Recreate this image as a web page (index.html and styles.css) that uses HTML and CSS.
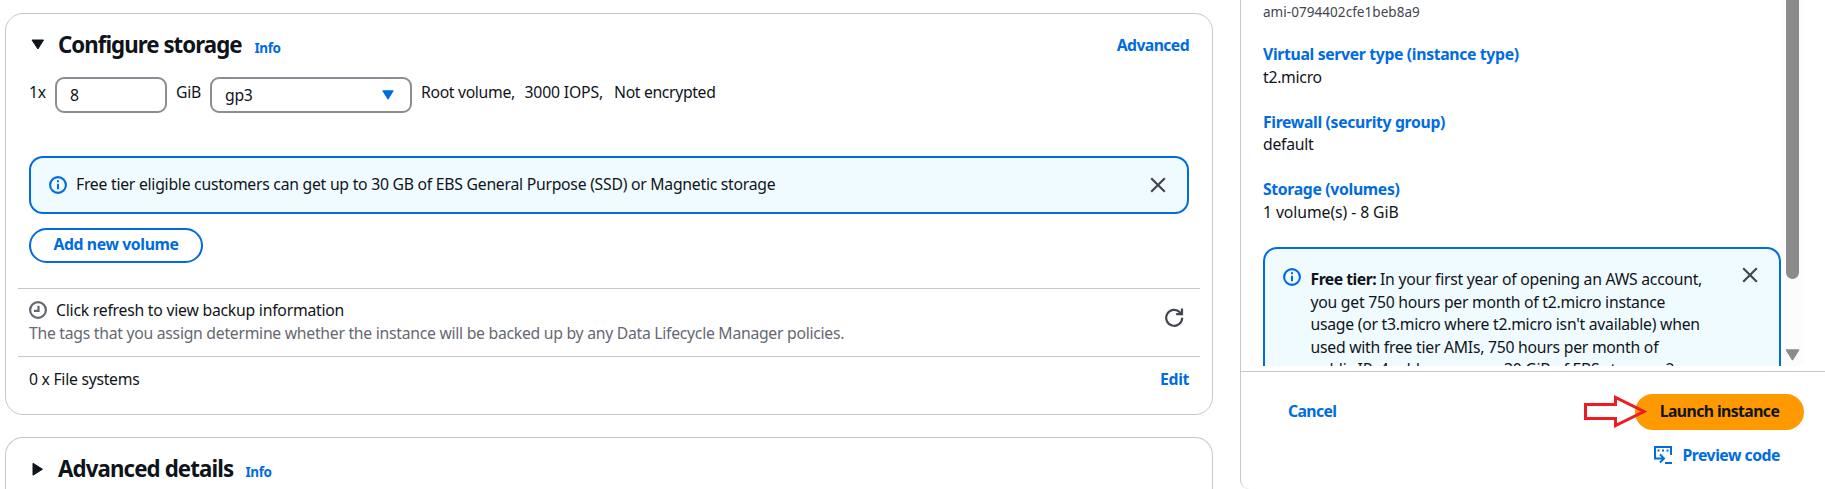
FILE: index.html
```
<!DOCTYPE html>
<html lang="en">
<head>
<meta charset="utf-8">
<title>Launch an instance</title>
<link rel="stylesheet" href="styles.css">
</head>
<body>
<main class="settings">
  <section class="card">
    <header class="card-header">
      <svg class="caret" width="18" height="18" viewBox="0 0 18 18"><path d="M3 4h11.500L8.900 13z" fill="#0f141a" stroke="#0f141a" stroke-linejoin="round"/></svg>
      <h2 class="title">Configure storage</h2>
      <a class="info">Info</a>
      <a class="link header-action">Advanced</a>
    </header>
    <div class="volume">
      <span class="count">1x</span>
      <div class="field size">8</div>
      <span class="unit">GiB</span>
      <div class="field type"><span>gp3</span><svg width="12" height="10" viewBox="0 0 12 10"><path d="M.8.800h10.400L6 9.200z" fill="#006ce0" stroke="#006ce0" stroke-linejoin="round"/></svg></div>
      <span class="root">Root volume,</span><span class="iops">3000 IOPS,</span><span class="encryption">Not encrypted</span>
    </div>
    <div class="alert storage-alert">
      <svg class="alert-icon" width="18" height="18" viewBox="0 0 18 18"><circle cx="9" cy="9" r="7.900" fill="none" stroke="#006ce0" stroke-width="2.100"/><path d="M8 4.300h2v2H8zM8 7.700h2v5.500H8z" fill="#006ce0"/></svg>
      <p class="storage-text">Free tier eligible customers can get up to 30 GB of EBS General Purpose (SSD) or Magnetic storage</p>
      <svg class="close" width="16" height="16" viewBox="0 0 16 16"><path d="M1.200 1.200l13.600 13.600M14.800 1.200L1.200 14.800" stroke="#424650" stroke-width="2.200"/></svg>
    </div>
    <button class="btn-outline">Add new volume</button>
    <div class="backup">
      <div>
        <div class="backup-title"><svg width="18" height="18" viewBox="0 0 18 18" fill="none" stroke="#656871" stroke-width="2.200"><circle cx="9" cy="9" r="7.900"/><path d="M9.500 4.800v5H5"/></svg><span>Click refresh to view backup information</span></div>
        <p class="backup-note">The tags that you assign determine whether the instance will be backed up by any Data Lifecycle Manager policies.</p>
      </div>
      <svg class="refresh" width="19" height="19" viewBox="0 0 19 19" fill="none" stroke="#424650" stroke-width="2.200"><path d="M17.200 9.800A8 8 0 1 1 14.900 4.200L16.500 6"/><path d="M17 .500v5.700h-5.800"/></svg>
    </div>
    <div class="file-systems"><span>0 x File systems</span><a class="link edit">Edit</a></div>
  </section>
  <section class="card advanced">
    <header class="card-header">
      <svg class="caret" width="18" height="18" viewBox="0 0 18 18"><path d="M4 3.300v11.900L13.500 9.200z" fill="#0f141a" stroke="#0f141a" stroke-linejoin="round"/></svg>
      <h2 class="title advanced-title">Advanced details</h2>
      <a class="info">Info</a>
    </header>
  </section>
</main>
<aside class="summary">
  <div class="scroller">
    <div class="details">
      <p class="ami">ami-0794402cfe1beb8a9</p>
      <dl class="pair"><dt>Virtual server type (instance type)</dt><dd>t2.micro</dd></dl>
      <dl class="pair"><dt>Firewall (security group)</dt><dd>default</dd></dl>
      <dl class="pair"><dt>Storage (volumes)</dt><dd class="volumes">1 volume(s) - 8 GiB</dd></dl>
      <div class="alert tier-alert">
        <svg class="alert-icon" width="18" height="18" viewBox="0 0 18 18"><circle cx="9" cy="9" r="7.900" fill="none" stroke="#006ce0" stroke-width="2.100"/><path d="M8 4.300h2v2H8zM8 7.700h2v5.500H8z" fill="#006ce0"/></svg>
        <p class="tier-text"><b>Free tier:</b> In your first year of opening an AWS account,<br>you get 750 hours per month of t2.micro instance<br>usage (or t3.micro where t2.micro isn't available) when<br>used with free tier AMIs, 750 hours per month of<br>public IPv4 address usage, 30 GiB of EBS storage, 2</p>
        <svg class="close" width="16" height="16" viewBox="0 0 16 16"><path d="M1.200 1.200l13.600 13.600M14.800 1.200L1.200 14.800" stroke="#424650" stroke-width="2.200"/></svg>
      </div>
    </div>
    <div class="track">
      <div class="thumb"></div>
      <svg width="15" height="12" viewBox="0 0 15 12"><path d="M1.500 1h12L7.500 10.500z" fill="#8b8b8b" stroke="#8b8b8b" stroke-width="1.500" stroke-linejoin="round"/></svg>
    </div>
  </div>
  <footer class="actions">
    <div class="action-row">
      <a class="link">Cancel</a>
      <div class="launch-wrap">
        <button class="launch">Launch instance</button>
        <svg class="pointer" width="66" height="34" viewBox="0 0 66 34"><path d="M3.500 10.500h30v-7L62 17.500l-28.500 14v-7h-30z" fill="none" stroke="#ed1c24" stroke-width="3"/></svg>
      </div>
    </div>
    <a class="link preview"><svg width="18" height="18" viewBox="0 0 18 18" fill="none" stroke="#006ce0" stroke-width="2"><path d="M17 9V1H1v11.500h8"/><path d="M6 8.500l4 4-4 4"/><path d="M11 17h7"/><path d="M3.500 4.500h11" stroke-dasharray="2 2.500"/></svg><span>Preview code</span></a>
  </footer>
</aside>
</body>
</html>
```

FILE: styles.css
```
* { box-sizing: border-box; }
html { height: 489px; overflow: hidden; }
body {
  margin: 0;
  height: 489px;
  overflow: hidden;
  display: flex;
  align-items: flex-start;
  gap: 27px;
  padding-left: 5px;
  background: #fff;
  color: #0f141a;
  font: 15.75px/22.5px "Noto Sans", "Open Sans", sans-serif;
  letter-spacing: -.27px;
}
h2, p, dl, dd { margin: 0; }
svg { flex: none; display: block; }
button { font: inherit; font-weight: 700; }
.settings { flex: none; width: 1208px; height: 489px; overflow: hidden; padding-top: 13px; display: flex; flex-direction: column; gap: 22px; }
.card { flex: none; border: 1px solid #c6c6cd; border-radius: 18px; height: 402px; padding: 17px 12px 0; }
.advanced { height: 52px; border-bottom: 0; border-radius: 18px 18px 0 0; }
.card-header { display: flex; align-items: baseline; height: 28px; padding: 0 11px; }
.caret { align-self: center; }
.title { font-size: 22.25px; line-height: 28px; letter-spacing: -.96px; margin-left: 11px; width: 184px; white-space: nowrap; }
.advanced-title { width: 175px; letter-spacing: -.88px; }
.info { color: #006ce0; font-size: 13.5px; font-weight: 700; margin-left: 12.5px; letter-spacing: -.42px; }
.link { color: #006ce0; font-weight: 700; letter-spacing: -.6px; }
.header-action { margin-left: auto; align-self: center; padding-top: 1px; }
.volume { display: flex; height: 36px; margin-top: 18px; padding: 0 11px; line-height: 30px; white-space: nowrap; }
.count { width: 26px; }
.field { border: 2px solid #8c8c94; border-radius: 9px; height: 36px; padding: 0 13px; line-height: 32px; }
.size { width: 112px; }
.unit { width: 43px; padding-left: 9px; }
.type { width: 202px; display: flex; justify-content: space-between; align-items: center; padding-right: 16px; }
.root { margin-left: 9px; width: 103.500px; letter-spacing: -.33px; }
.iops { width: 89.500px; letter-spacing: -.17px; }
.encryption { letter-spacing: -.34px; }
.alert { display: flex; border: 2px solid #006ce0; border-radius: 14px; background: #f0fbff; }
.storage-alert { height: 58px; margin: 43px 11px 0; padding: 0 21px 0 18px; align-items: center; }
.storage-text { margin: -1px 0 0 9px; letter-spacing: -.255px; }
.alert .close { margin-left: auto; }
.btn-outline {
  display: block; width: 174px; height: 35px; margin: 14px 11px 0; padding: 0 0 3px;
  border: 2px solid #006ce0; border-radius: 18px; background: #fff;
  color: #006ce0; letter-spacing: -.38px;
}
.backup { display: flex; justify-content: space-between; margin-top: 25px; height: 68px; padding: 10px 11px 0; border-top: 1px solid #c6c6cd; }
.backup-title { display: flex; align-items: center; gap: 9px; letter-spacing: -.23px; }
.refresh { margin: 9px 5px 0 0; }
.file-systems { display: flex; justify-content: space-between; padding: 11px 11px 0; border-top: 1px solid #c6c6cd; }
.edit { letter-spacing: -.35px; }
.backup-note { color: #656871; letter-spacing: -.275px; }
.summary { flex: none; width: 587px; height: 489px; overflow: hidden; border-left: 1px solid #c6c6cd; border-bottom-left-radius: 9px 9px; }
.scroller { display: flex; height: 366px; overflow: hidden; }
.details { flex: none; width: 540px; padding-left: 22px; }
.ami { font-size: 13.5px; line-height: 22px; color: #424650; padding-top: 1px; letter-spacing: .05px; }
.pair { margin-top: 20px; height: 47.5px; }
.pair dt { color: #006ce0; font-weight: 700; letter-spacing: -.33px; }
.pair .volumes { letter-spacing: -.08px; }
.tier-alert { height: 200px; margin-top: 21.5px; padding: 19px 21px 0 18px; }
.tier-alert .close { margin-top: -1px; }
.tier-text { margin: 0 0 0 9.5px; white-space: nowrap; letter-spacing: -.255px; }
.tier-text b { letter-spacing: -.5px; }
.track { flex: none; width: 23px; background: #fcfcfc; display: flex; flex-direction: column; align-items: center; }
.thumb { width: 13px; height: 279px; margin-bottom: 70px; border-radius: 0 0 7px 7px; background: #8b8b8b; }
.actions { border-top: 1px solid #c6c6cd; margin-top: 5px; padding: 22px 23px 0 47px; display: flex; flex-direction: column; }
.action-row { display: flex; justify-content: space-between; height: 36px; line-height: 35px; }
.launch-wrap { position: relative; }
.launch { display: block; width: 169px; height: 36px; border: 0; border-radius: 18px; background: #f90; color: #0f141a; padding: 0 0 1px; letter-spacing: -.57px; }
.pointer { position: absolute; left: -53px; top: 0; }
.preview { align-self: flex-end; display: flex; gap: 10px; align-items: center; margin: 14px 24px 0 0; letter-spacing: -.48px; }
```
